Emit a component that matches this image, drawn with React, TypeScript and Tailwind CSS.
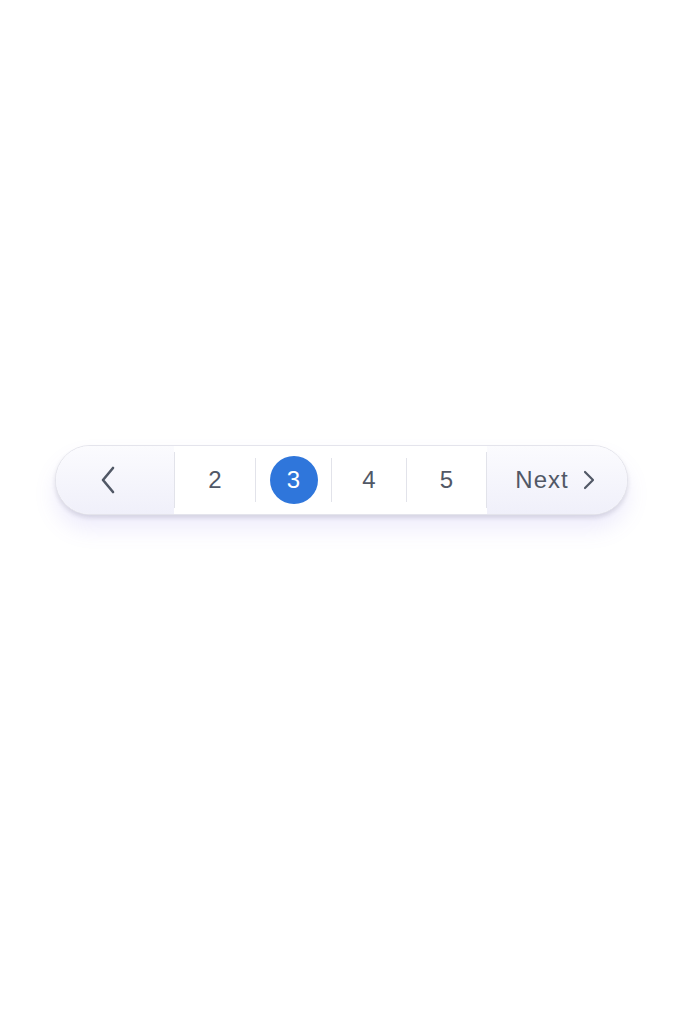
import { useState } from "react";

const pages = [
  { n: 2, w: "w-[80px]" },
  { n: 3, w: "w-[75px]" },
  { n: 4, w: "w-[74px]" },
  { n: 5, w: "w-[79px]" },
];

function Divider({ tall }: { tall?: boolean }) {
  return (
    <div
      className={`w-px shrink-0 self-center bg-[#e2e3ea] ${tall ? "h-[56px]" : "h-[44px]"}`}
    />
  );
}

export default function App() {
  const [current, setCurrent] = useState(3);

  return (
    <div
      className="min-h-screen bg-white pt-[445px] pl-[55px]"
      style={{ fontFamily: '"Liberation Sans", Arial, sans-serif' }}
    >
      <nav className="flex h-[70px] w-[573px] overflow-hidden rounded-full border border-[#e4e4ec] bg-white text-[24px] text-[#515866] shadow-[0_3px_4px_rgba(60,60,80,0.14),0_14px_22px_rgba(120,110,230,0.13)]">
        <button
          className="flex w-[118px] items-center justify-center bg-gradient-to-b from-[#fbfbfe] to-[#f0f0fa] pr-[14px]"
          onClick={() => setCurrent(Math.max(1, current - 1))}
        >
          <svg width="16" height="28" viewBox="0 0 16 28" fill="none">
            <path
              d="M13 2 L3 14 L13 26"
              stroke="#515866"
              strokeWidth="2.6"
              strokeLinecap="round"
              strokeLinejoin="round"
            />
          </svg>
        </button>
        <Divider tall />
        {pages.map((p, i) => (
          <div key={p.n} className="flex">
            {i > 0 && <Divider />}
            <button
              className={`flex ${p.w} items-center justify-center`}
              onClick={() => setCurrent(p.n)}
            >
              {p.n === current ? (
                <span className="flex h-[48px] w-[48px] items-center justify-center rounded-full bg-[#2f76db] text-white">
                  {p.n}
                </span>
              ) : (
                <span>{p.n}</span>
              )}
            </button>
          </div>
        ))}
        <Divider tall />
        <button
          className="flex flex-1 items-center justify-center gap-[14px] bg-gradient-to-b from-[#fbfbfe] to-[#f0f0fa] pr-[4px]"
          onClick={() => setCurrent(Math.min(5, current + 1))}
        >
          <span className="tracking-[1px]">Next</span>
          <svg width="12" height="20" viewBox="0 0 12 20" fill="none">
            <path
              d="M2 2 L10 10 L2 18"
              stroke="#515866"
              strokeWidth="2.2"
              strokeLinecap="round"
              strokeLinejoin="round"
            />
          </svg>
        </button>
      </nav>
    </div>
  );
}
